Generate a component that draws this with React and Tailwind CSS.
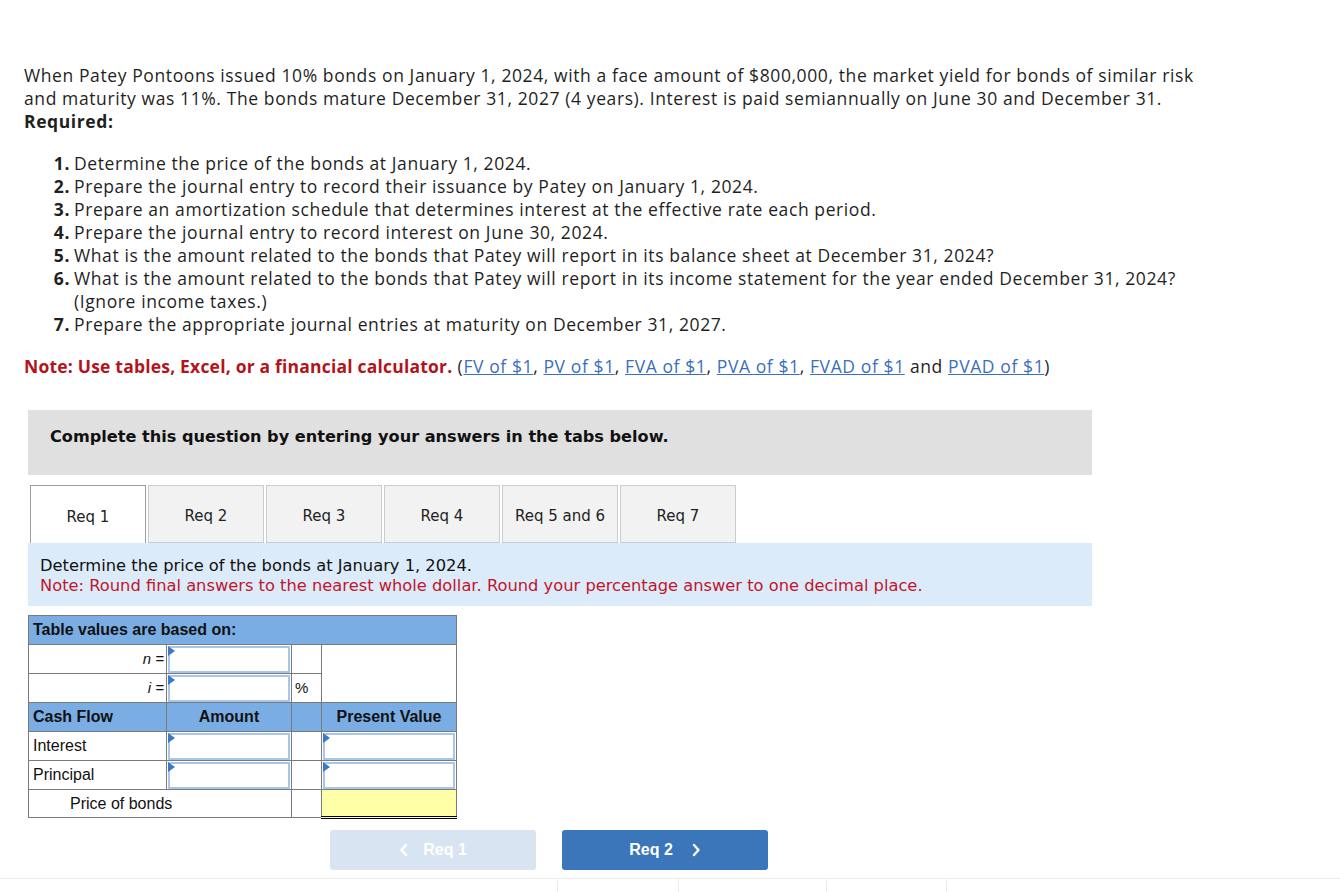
import React from 'react'

const items = [
  ['1.', 'Determine the price of the bonds at January 1, 2024.'],
  ['2.', 'Prepare the journal entry to record their issuance by Patey on January 1, 2024.'],
  ['3.', 'Prepare an amortization schedule that determines interest at the effective rate each period.'],
  ['4.', 'Prepare the journal entry to record interest on June 30, 2024.'],
  ['5.', 'What is the amount related to the bonds that Patey will report in its balance sheet at December 31, 2024?'],
  ['6.', 'What is the amount related to the bonds that Patey will report in its income statement for the year ended December 31, 2024?'],
  ['', '(Ignore income taxes.)'],
  ['7.', 'Prepare the appropriate journal entries at maturity on December 31, 2027.'],
]

const links = ['FV of $1', 'PV of $1', 'FVA of $1', 'PVA of $1', 'FVAD of $1']

const tabs = ['Req 1', 'Req 2', 'Req 3', 'Req 4', 'Req 5 and 6', 'Req 7']

function InputBox() {
  return (
    <div className="relative h-[27px] mx-px border-2 border-[#a8c6ea] bg-white">
      <span className="absolute -left-[2px] -top-[2px] w-0 h-0 border-t-[5px] border-b-[5px] border-l-[7px] border-t-transparent border-b-transparent border-l-[#3b78c5]" />
    </div>
  )
}

export default function App() {
  return (
    <div className="min-h-[892px] bg-white text-[#1f1f1f] relative">
      <div className="pl-6 pt-[64px] text-[17.5px] leading-[23px] tracking-[0.6px]" style={{ fontFamily: '"Open Sans", Lato, sans-serif' }}>
        <p>
          When Patey Pontoons issued 10% bonds on January 1, 2024, with a face amount of $800,000, the market yield for bonds of similar risk
          <br />
          and maturity was 11%. The bonds mature December 31, 2027 (4 years). Interest is paid semiannually on June 30 and December 31.
          <br />
          <b>Required:</b>
        </p>

        <ul className="mt-[19px]">
          {items.map(([n, t], i) => (
            <li key={i} className="flex">
              <span className="w-[50px] text-right font-bold pr-[4px]">{n}</span>
              <span>{t}</span>
            </li>
          ))}
        </ul>

        <p className="mt-[19px]">
          <span className="font-bold text-[#b3141c] tracking-[0.2px]">Note: Use tables, Excel, or a financial calculator.</span>{' '}
          (
          {links.map((l, i) => (
            <React.Fragment key={l}>
              <a className="text-[#3a6fbf] underline">{l}</a>
              {i < links.length - 1 ? ', ' : ''}
            </React.Fragment>
          ))}{' '}
          and <a className="text-[#3a6fbf] underline">PVAD of $1</a>)
        </p>
      </div>

      <div className="ml-[28px] w-[1064px] mt-[32px]" style={{ fontFamily: '"DejaVu Sans", Verdana, sans-serif' }}>
        <div className="h-[65px] bg-[#e0e0e0] flex items-center pl-[22px] pb-[10px]">
          <span className="font-bold text-[16.15px] text-[#111]">Complete this question by entering your answers in the tabs below.</span>
        </div>

        <div className="mt-[10px] flex pl-[2px] gap-[2px] items-end">
          {tabs.map((t, i) => (
            <div
              key={t}
              className={
                i === 0
                  ? 'w-[116px] h-[58px] pt-[5px] flex items-center justify-center bg-white border border-b-0 border-[#9e9e9e] text-[15px] text-[#222]'
                  : 'w-[116px] h-[58px] pt-[5px] flex items-center justify-center bg-[#f2f2f2] border border-[#cccccc] text-[15px] text-[#222]'
              }
            >
              {t}
            </div>
          ))}
        </div>

        <div className="bg-[#dcebf9] h-[63px] pl-[12px] pt-[13px] text-[16.3px] leading-[20px]">
          <div className="text-[#111]">Determine the price of the bonds at January 1, 2024.</div>
          <div className="text-[#c0162c]">Note: Round final answers to the nearest whole dollar. Round your percentage answer to one decimal place.</div>
        </div>

        <table className="mt-[9px] border-collapse text-[16px] text-[#111]" style={{ fontFamily: '"Liberation Sans", Arial, sans-serif' }}>
          <colgroup>
            <col className="w-[138px]" />
            <col className="w-[125px]" />
            <col className="w-[30px]" />
            <col className="w-[135px]" />
          </colgroup>
          <tbody>
            <tr className="h-[29px] bg-[#7aade4]">
              <td colSpan={4} className="border border-[#7a7a7a] px-[4px] font-bold">Table values are based on:</td>
            </tr>
            <tr className="h-[29px]">
              <td className="border border-[#7a7a7a] text-right pr-[2px] italic text-[15px]">n =</td>
              <td className="border border-[#7a7a7a] p-0"><InputBox /></td>
              <td className="border border-[#7a7a7a]"></td>
              <td rowSpan={2} className="border border-[#7a7a7a]"></td>
            </tr>
            <tr className="h-[29px]">
              <td className="border border-[#7a7a7a] text-right pr-[2px] italic text-[15px]">i =</td>
              <td className="border border-[#7a7a7a] p-0"><InputBox /></td>
              <td className="border border-[#7a7a7a] pl-[3px] text-[15px]">%</td>
            </tr>
            <tr className="h-[29px] bg-[#7aade4] font-bold">
              <td className="border border-[#7a7a7a] px-[4px]">Cash Flow</td>
              <td className="border border-[#7a7a7a] text-center">Amount</td>
              <td className="border border-[#7a7a7a]"></td>
              <td className="border border-[#7a7a7a] text-center">Present Value</td>
            </tr>
            <tr className="h-[29px]">
              <td className="border border-[#7a7a7a] px-[4px]">Interest</td>
              <td className="border border-[#7a7a7a] p-0"><InputBox /></td>
              <td className="border border-[#7a7a7a]"></td>
              <td className="border border-[#7a7a7a] p-0"><InputBox /></td>
            </tr>
            <tr className="h-[29px]">
              <td className="border border-[#7a7a7a] px-[4px]">Principal</td>
              <td className="border border-[#7a7a7a] p-0"><InputBox /></td>
              <td className="border border-[#7a7a7a]"></td>
              <td className="border border-[#7a7a7a] p-0"><InputBox /></td>
            </tr>
            <tr className="h-[28px]">
              <td colSpan={2} className="border border-[#7a7a7a] pl-[41px]">Price of bonds</td>
              <td className="border border-[#7a7a7a]"></td>
              <td className="border border-[#7a7a7a] border-b-[3px] border-b-black border-double bg-[#ffffa8]"></td>
            </tr>
          </tbody>
        </table>

        <div className="mt-[11px] flex gap-[26px] pl-[302px]" style={{ fontFamily: '"Liberation Sans", Arial, sans-serif' }}>
          <button className="w-[206px] h-[40px] rounded-[3px] bg-[#d8e4f1] text-white font-bold text-[16px] flex items-center justify-center gap-[14px]">
            <svg width="10" height="14" viewBox="0 0 10 14" fill="none" stroke="white" strokeWidth="2.4" strokeLinecap="round" strokeLinejoin="round"><path d="M7 2 L2.5 7 L7 12" /></svg>
            <span>Req 1</span>
          </button>
          <button className="w-[206px] h-[40px] rounded-[3px] bg-[#3a76b9] text-white font-bold text-[16px] flex items-center justify-center gap-[18px]">
            <span>Req 2</span>
            <svg width="10" height="14" viewBox="0 0 10 14" fill="none" stroke="white" strokeWidth="2.4" strokeLinecap="round" strokeLinejoin="round"><path d="M3 2 L7.5 7 L3 12" /></svg>
          </button>
        </div>
      </div>

      <div className="mt-[8px] border-t border-[#ececec] flex h-[14px]">
        <div className="w-[557px]" />
        <div className="w-[121px] border-l border-[#ececec]" />
        <div className="w-[148px] border-l border-[#ececec]" />
        <div className="w-[120px] border-l border-[#ececec]" />
        <div className="border-l border-[#ececec]" />
      </div>
    </div>
  )
}
